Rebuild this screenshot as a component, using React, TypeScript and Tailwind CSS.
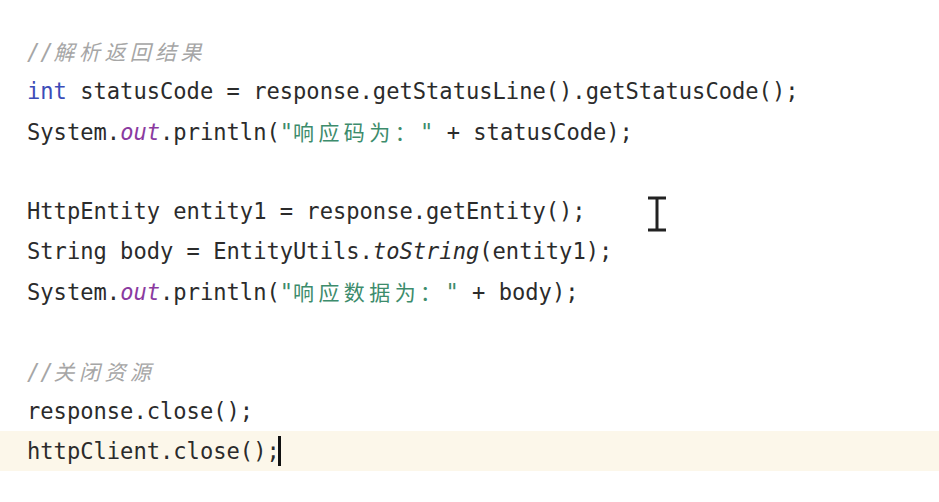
import React from 'react';

const mono = "font-['DejaVu_Sans_Mono','Liberation_Mono','Noto_Sans_CJK_SC',monospace]";

// CJK glyphs take two monospace cells in the editor
const Cjk: React.FC<{ children: React.ReactNode; className?: string }> = ({ children, className }) => (
  <span className={`font-['Noto_Sans_CJK_SC',sans-serif] text-[21px] tracking-[4.4px] ${className ?? ''}`}>{children}</span>
);

const Line: React.FC<{ children?: React.ReactNode; active?: boolean }> = ({ children, active }) => (
  <div className={`h-[40px] leading-[40px] pl-[27px] whitespace-pre ${active ? 'bg-[#fcf7ea]' : ''}`}>
    {children}
  </div>
);

const Comment: React.FC<{ text: string }> = ({ text }) => (
  <span className="text-[#a6a6a6] italic">
    //<Cjk className="italic">{text}</Cjk>
  </span>
);

const Out = () => <span className="italic text-[#8b3aa0]">out</span>;

export default function App() {
  return (
    <div className={`relative w-[939px] h-[502px] bg-white overflow-hidden text-[22.1px] text-[#2b2b2b] ${mono}`}>
      <div className="pt-[31px]">
        <Line><Comment text="解析返回结果" /></Line>
        <Line>
          <span className="text-[#3b4cb8]">int</span> statusCode = response.getStatusLine().getStatusCode();
        </Line>
        <Line>
          System.<Out />.println(<span className="text-[#3d8c6c]">"<Cjk>响应码为：</Cjk>"</span> + statusCode);
        </Line>
        <Line />
        <Line>HttpEntity entity1 = response.getEntity();</Line>
        <Line>
          String body = EntityUtils.<span className="italic">toString</span>(entity1);
        </Line>
        <Line>
          System.<Out />.println(<span className="text-[#3d8c6c]">"<Cjk>响应数据为：</Cjk>"</span> + body);
        </Line>
        <Line />
        <Line><Comment text="关闭资源" /></Line>
        <Line>response.close();</Line>
        <Line active>
          httpClient.close();<span className="inline-block w-[3px] h-[30px] bg-[#111] align-middle -mt-[4px] -ml-[2px]" />
        </Line>
      </div>

      {/* mouse I-beam */}
      <svg className="absolute left-[646px] top-[196px]" width="22" height="36" viewBox="0 0 22 36">
        <path d="M2 2h18M2 34h18M11 2v32" stroke="#222" strokeWidth="3" fill="none" />
      </svg>
    </div>
  );
}
